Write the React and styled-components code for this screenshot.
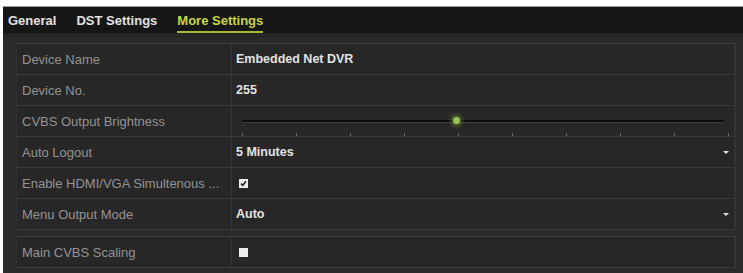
import React from "react"
import styled, { createGlobalStyle } from "styled-components"

const GlobalStyle = createGlobalStyle`
  html, body { margin: 0; padding: 0; background: #ffffff; }
  body { font-family: "Liberation Sans", Arial, sans-serif; }
`

const rows = [
  { label: "Device Name", type: "text", value: "Embedded Net DVR" },
  { label: "Device No.", type: "text", value: "255" },
  { label: "CVBS Output Brightness", type: "slider", value: 4 },
  { label: "Auto Logout", type: "select", value: "5 Minutes" },
  { label: "Enable HDMI/VGA Simultenous ...", type: "check", value: true },
  { label: "Menu Output Mode", type: "select", value: "Auto" },
]

export default function App() {
  const [active, setActive] = React.useState(2)
  const tabs = ["General", "DST Settings", "More Settings"]
  return (
    <>
      <GlobalStyle />
      <Window>
        <TabBar>
          {tabs.map((t, i) => (
            <Tab key={t} active={i === active} onClick={() => setActive(i)}>{t}</Tab>
          ))}
        </TabBar>
        <Panel>
          <Table>
            {rows.map((r) => <SettingRow key={r.label} row={r} />)}
          </Table>
          <Table gap>
            <SettingRow row={{ label: "Main CVBS Scaling", type: "check", value: false }} />
          </Table>
        </Panel>
      </Window>
    </>
  )
}

function SettingRow({ row }) {
  return (
    <Row>
      <Label>{row.label}</Label>
      <Value>
        {row.type === "text" && <ValueText>{row.value}</ValueText>}
        {row.type === "select" && (
          <>
            <ValueText>{row.value}</ValueText>
            <Arrow />
          </>
        )}
        {row.type === "check" && (
          <Check>
            {row.value && (
              <svg width="7" height="7" viewBox="0 0 7 7">
                <path d="M1 3.6 L2.8 5.4 L6 1.2" stroke="#222" strokeWidth="1.6" fill="none" />
              </svg>
            )}
          </Check>
        )}
        {row.type === "slider" && <Slider value={row.value} />}
      </Value>
    </Row>
  )
}

function Slider({ value }) {
  const ticks = Array.from({ length: 10 })
  return (
    <SliderBox>
      <Track>
        <Thumb style={{ left: `${(value / 9) * 100}%` }} />
      </Track>
      <Ticks>
        {ticks.map((_, i) => <Tick key={i} />)}
      </Ticks>
    </SliderBox>
  )
}

const Window = styled.div`
  margin-top: 6px;
  border-top: 1px solid #9a9a9a;
  margin-left: 3px;
  height: 266px;
  background: #2a2a2a;
  display: flex;
  flex-direction: column;
  overflow: hidden;
`
const TabBar = styled.div`
  height: 26px;
  background: #161616;
  display: flex;
  align-items: stretch;
  padding-left: 5px;
  gap: 20px;
  flex-shrink: 0;
`
const Tab = styled.div`
  font-size: 13px;
  font-weight: bold;
  color: ${p => p.active ? "#c9d640" : "#e2e2e2"};
  display: flex;
  align-items: center;
  padding-top: 2px;
  box-sizing: border-box;
  border-bottom: 2px solid ${p => p.active ? "#a9b638" : "transparent"};
  cursor: pointer;
`
const Panel = styled.div`
  flex: 1;
  background: linear-gradient(#242424 0, #2b2b2b 8px);
  padding: 10px 7px 0 13px;
`
const Table = styled.div`
  display: flex;
  flex-direction: column;
  margin-top: ${p => p.gap ? "6px" : "0"};
  border-top: 1px solid #3b3b3b;
  border-right: 2px solid #343434;
`
const Row = styled.div`
  display: flex;
  height: 30px;
  background: #272727;
  border-bottom: 1px solid #3a3a3a;
  border-left: 1px solid #303030;
`
const Label = styled.div`
  width: 209px;
  padding-left: 5px;
  border-right: 1px solid #363636;
  display: flex;
  align-items: center;
  font-size: 13px;
  color: #939393;
  white-space: nowrap;
  overflow: hidden;
`
const Value = styled.div`
  flex: 1;
  display: flex;
  align-items: center;
  padding-left: 4px;
  padding-right: 4px;
  position: relative;
`
const ValueText = styled.span`
  font-size: 12.5px;
  font-weight: bold;
  color: #e2e2e2;
  flex: 1;
`
const Arrow = styled.span`
  width: 0;
  height: 0;
  border-left: 3px solid transparent;
  border-right: 3px solid transparent;
  border-top: 3px solid #e0e0e0;
  margin-right: 1px;
`
const Check = styled.div`
  width: 9px;
  height: 9px;
  margin-left: 3px;
  background: #ececec;
  display: flex;
  align-items: center;
  justify-content: center;
`
const SliderBox = styled.div`
  flex: 1;
  align-self: stretch;
  display: flex;
  flex-direction: column;
  justify-content: flex-end;
  padding: 0 0 0 6px;
`
const Track = styled.div`
  position: relative;
  height: 2px;
  background: #0e0e0e;
  border-bottom: 1px solid #3c3c3c;
  margin: 0 6px 10px 0;
`
const Thumb = styled.div`
  position: absolute;
  top: -3px;
  width: 7px;
  height: 7px;
  margin-left: -3px;
  border-radius: 50%;
  background: #9cbf5a;
  box-shadow: 0 0 4px 2px rgba(120, 170, 60, 0.55);
`
const Ticks = styled.div`
  display: flex;
  justify-content: space-between;
  height: 3px;
  margin-right: 1px;
`
const Tick = styled.div`
  width: 1px;
  height: 3px;
  background: #6a6a6a;
`
